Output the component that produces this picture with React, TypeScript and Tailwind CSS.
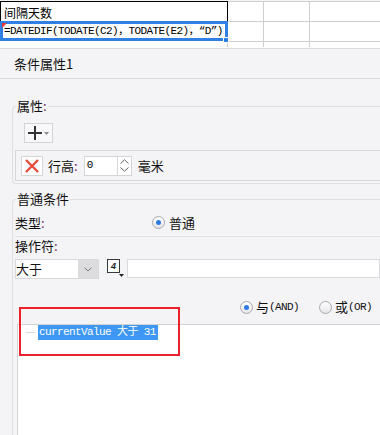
// Condition-property panel under a spreadsheet strip

const Colon = () => <span className="text-[#7a2a66]">:</span>;

function Radio({ checked }: { checked?: boolean }) {
  return (
    <span className="w-[13px] h-[13px] rounded-full border border-[#a9a9ad] bg-gradient-to-b from-white to-[#e6e6e9] flex items-center justify-center shrink-0">
      {checked && <span className="w-[5px] h-[5px] rounded-full bg-[#2f7be6]" />}
    </span>
  );
}

// ─ Spreadsheet strip ───────────────────────────
function Sheet() {
  const g = 'border-[#cfcfd2]';
  return (
    <div className="bg-white h-[47px]">
      <div className="flex mt-[1px] h-[20px]">
        <div className="w-[228px] h-full border-l border-t border-r border-black flex items-end pl-[3px] pb-[0px] leading-[16px] text-[12px] text-black">
          间隔天数
        </div>
        <div className={`w-[36px] h-full border-t border-r ${g}`} />
        <div className={`w-[46px] h-full border-t border-r ${g}`} />
        <div className={`flex-1 h-full border-t ${g}`} />
      </div>
      <div className="flex h-[20px]">
        <div className="relative w-[228px] h-full border-[3px] border-[#2f7fe6] flex items-center pl-[1px] font-['Liberation_Mono','Noto_Sans_CJK_SC',monospace] text-[11px] tracking-[-0.6px] text-black whitespace-nowrap">
          <svg className="absolute -left-[1px] -top-[1px]" width="5" height="5" viewBox="0 0 5 5">
            <polygon points="0,0 5,0 0,5" fill="#e23a3a" />
          </svg>
          =DATEDIF(TODATE(C2)，TODATE(E2)，“D”)
          <span className="absolute -right-[4px] -bottom-[5px] w-[6px] h-[6px] bg-[#2f7fe6] border border-white" />
        </div>
        <div className={`w-[36px] h-full border-t border-r ${g}`} />
        <div className={`w-[46px] h-full border-t border-r ${g}`} />
        <div className={`flex-1 h-full border-t ${g}`} />
      </div>
      <div className="flex h-[6px]">
        <div className={`w-[228px] h-full border-r ${g}`} />
        <div className={`w-[36px] h-full border-t border-r ${g}`} />
        <div className={`w-[46px] h-full border-t border-r ${g}`} />
        <div className={`flex-1 h-full border-t ${g}`} />
      </div>
    </div>
  );
}

// ─ Attribute fieldset ──────────────────────────
function AttrFieldset() {
  return (
    <fieldset className="mt-[19px] ml-[12px] w-[368px] border border-r-0 border-[#dfdfe2] rounded-l-[4px]">
      <legend className="ml-[3px] px-[1px] leading-[16px] text-[13px]">
        属性<Colon />
      </legend>
      <div className="ml-[11px] mt-[9px] w-[29px] h-[20px] border border-[#d4d4d7] bg-[#f8f8fa] flex items-center pl-[3px] gap-[2px]">
        <svg width="14" height="14" viewBox="0 0 14 14">
          <path d="M7 0v14M0 7h14" stroke="#333" strokeWidth="2" />
        </svg>
        <svg width="5" height="3" viewBox="0 0 5 3">
          <polygon points="0,0 5,0 2.5,3" fill="#8a8a8a" />
        </svg>
      </div>
      <div className="mt-[7px] ml-[2px] h-[31px] border border-r-0 border-[#d6d6d9] flex items-center pl-[5px]">
        <div className="w-[22px] h-[20px] bg-white border border-[#d6d6d9] flex items-center justify-center">
          <svg width="14" height="14" viewBox="0 0 14 14">
            <path d="M1 1l12 12M13 1L1 13" stroke="#ea4a3c" strokeWidth="2.4" />
          </svg>
        </div>
        <span className="ml-[5px] text-[13px] leading-[16px]">
          行高<Colon />
        </span>
        <div className="ml-[6px] w-[34px] h-[20px] bg-white border border-[#d6d6d9] flex items-center pl-[2px] font-['Liberation_Mono',monospace] text-[11px] text-black">
          0
        </div>
        <div className="w-[14px] h-[20px] bg-white border border-l-0 border-[#d6d6d9] flex flex-col items-center justify-around py-[1px]">
          <svg width="9" height="5" viewBox="0 0 9 5">
            <path d="M0.5 4.5L4.5 0.8L8.5 4.5" stroke="#6a6a6a" fill="none" />
          </svg>
          <svg width="9" height="5" viewBox="0 0 9 5">
            <path d="M0.5 0.5L4.5 4.2L8.5 0.5" stroke="#6a6a6a" fill="none" />
          </svg>
        </div>
        <span className="ml-[6px] text-[13px] leading-[16px]">毫米</span>
      </div>
      <div className="h-[2px]" />
    </fieldset>
  );
}

// ─ Normal condition fieldset ───────────────────
function CondFieldset() {
  return (
    <fieldset className="mt-[7px] ml-[12px] w-[368px] h-[300px] border border-r-0 border-b-0 border-[#dfdfe2] rounded-tl-[4px]">
      <legend className="ml-[3px] px-[1px] leading-[16px] text-[13px]">普通条件</legend>
      <div className="mt-[2px] h-[27px] flex items-center pl-[2px] text-[13px]">
        <span className="w-[137px]">
          类型<Colon />
        </span>
        <Radio checked />
        <span className="ml-[4px]">普通</span>
      </div>
      <div className="ml-[2px] h-[1px] bg-[#e2e2e5]" />
      <div className="h-[18px] flex items-center pl-[2px] text-[13px]">
        操作符<Colon />
      </div>
      <div className="mt-[4px] h-[20px] flex items-start pl-[2px]">
        <div className="w-[84px] h-[20px] bg-white border border-[#d9d9dc] flex text-[13px] leading-[18px]">
          <span className="flex-1">大于</span>
          <span className="w-[20px] h-full bg-[#dcdcdf] flex items-center justify-center">
            <svg width="8" height="5" viewBox="0 0 8 5">
              <path d="M0.5 0.5L4 4L7.5 0.5" stroke="#7a7a7a" fill="none" />
            </svg>
          </span>
        </div>
        <div className="relative ml-[8px] w-[13px] h-[14px] border border-[#3a3a3a] bg-white flex items-center justify-center font-['Liberation_Sans',sans-serif] text-[9px] font-bold italic leading-none text-[#222]">
          4
          <svg className="absolute -right-[5px] -bottom-[5px]" width="5" height="3" viewBox="0 0 5 3">
            <polygon points="0,0 5,0 2.5,3" fill="#222" />
          </svg>
        </div>
        <div className="ml-[7px] flex-1 h-[19px] bg-white border border-[#dadadd]" />
      </div>
      <div className="mt-[18px] h-[20px] flex items-center ml-[227px] text-[13px]">
        <Radio checked />
        <span className="ml-[3px]">与</span>
        <span className="font-['Liberation_Mono',monospace] text-[11px] tracking-[-0.6px]">(AND)</span>
        <span className="ml-[20px]" />
        <Radio />
        <span className="ml-[3px]">或</span>
        <span className="font-['Liberation_Mono',monospace] text-[11px] tracking-[-0.6px]">(OR)</span>
      </div>
      <div className="mt-[7px] ml-[4px] h-[140px] bg-white border-t border-l border-[#d3d3d6]">
        <div className="h-[15px] flex items-center">
          <span className="ml-[8px] w-[9px] h-[1px] bg-[#d9d9dc]" />
          <span className="ml-[3px] h-[15px] bg-[#3d97f3] text-white pl-[1px] pr-[2px] flex items-center whitespace-nowrap font-['Liberation_Mono','Noto_Sans_CJK_SC',monospace] text-[11px] tracking-[-0.6px]">
            currentValue 大于 31
          </span>
        </div>
      </div>
    </fieldset>
  );
}

export default function App() {
  return (
    <div className="relative w-[380px] h-[435px] overflow-hidden bg-[#f4f4f6] text-[#111] font-['Noto_Sans_CJK_SC',sans-serif]">
      <Sheet />
      <div className="h-[31px] border-y border-[#dcdcdf] flex items-center pl-[14px] text-[13px]">
        条件属性1
      </div>
      <AttrFieldset />
      <CondFieldset />

      {/* red annotation box */}
      <div className="absolute left-[19px] top-[307px] w-[161px] h-[49px] border-2 border-[#e8212b] pointer-events-none" />
    </div>
  );
}
